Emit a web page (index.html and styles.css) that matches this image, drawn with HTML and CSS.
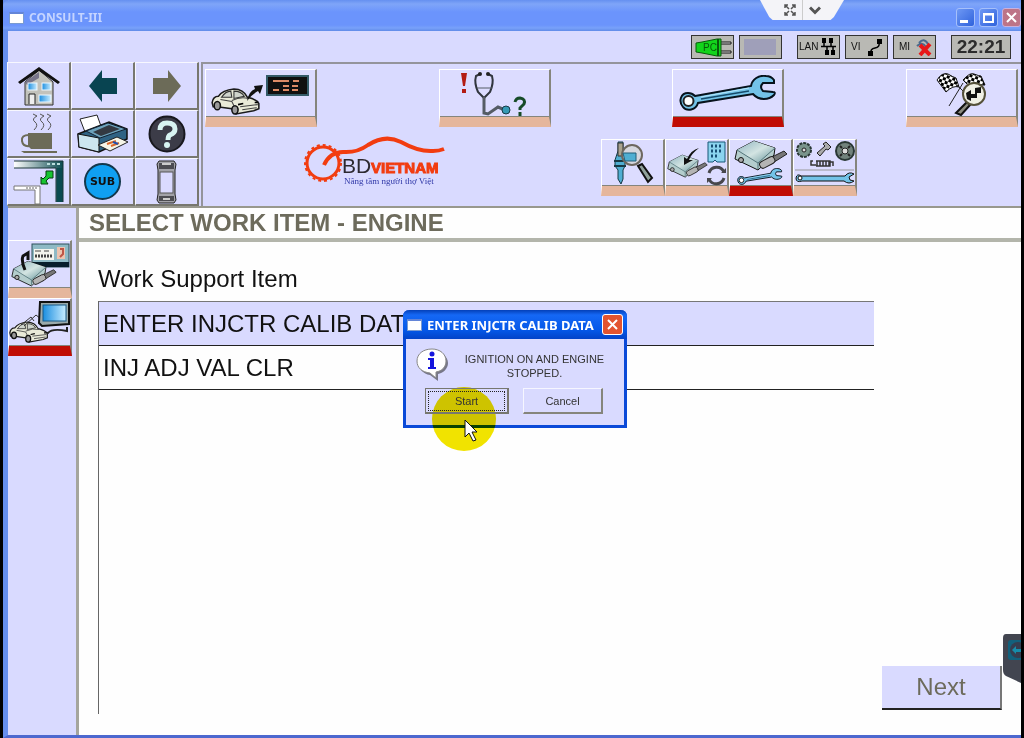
FILE: index.html
```
<!DOCTYPE html>
<html lang="en">
<head>
<meta charset="UTF-8">
<meta name="viewport" content="width=device-width, initial-scale=1.0">
<title>CONSULT-III</title>
<link rel="stylesheet" href="styles.css">
</head>
<body>

<!-- shared shapes -->
<svg class="defs" width="0" height="0" aria-hidden="true">
    <defs>
        <linearGradient id="steel" x1="0" y1="0" x2="1" y2="1">
            <stop offset="0" stop-color="#8fb4c0"/>
            <stop offset="0.5" stop-color="#d3e4e2"/>
            <stop offset="1" stop-color="#5f8f96"/>
        </linearGradient>
        <linearGradient id="glass" x1="0" y1="0" x2="1" y2="0">
            <stop offset="0" stop-color="#1a8ee0"/>
            <stop offset="1" stop-color="#c8ecff"/>
        </linearGradient>
        <linearGradient id="frame" x1="0" y1="0" x2="1" y2="0">
            <stop offset="0" stop-color="#ffffff"/>
            <stop offset="1" stop-color="#0a4a50"/>
        </linearGradient>
        <pattern id="check" width="6" height="6" patternUnits="userSpaceOnUse" patternTransform="rotate(20)">
            <rect width="6" height="6" fill="#fff"/>
            <rect width="3" height="3" fill="#000"/>
            <rect x="3" y="3" width="3" height="3" fill="#000"/>
        </pattern>
        <symbol id="wrench" viewBox="0 0 98 38">
            <path d="M16 21 L72 11 C73 4 80 0 87 1 Q92 1 95 5 L95 8 L84 8 Q80 12 84 16 L94 17 Q97 17 95 20 C90 25 80 26 74 19 L19 28 C17 35 8 37 4 32 C-1 26 2 18 9 18 Q13 18 16 21Z" fill="#73c3e8" stroke="#07131c" stroke-width="2"/>
            <path d="M22 24 L70 16" stroke="#154b6a" stroke-width="1.5"/>
            <path d="M22 22 L70 13" stroke="#b5e6fa" stroke-width="1"/>
            <circle cx="9.5" cy="26" r="5" fill="#fff" stroke="#222" stroke-width="2"/>
        </symbol>
        <symbol id="ecu" viewBox="0 0 54 32">
            <path d="M34 19 L50 11 L53 14 L37 24Z" fill="#777" stroke="#222"/>
            <path d="M3 10 L20 1 L41 8 L40 15 L24 30 L1 19Z" fill="#b4cdcd" stroke="#111"/>
            <path d="M3 10 L20 1 L41 8 L24 23Z" fill="url(#steel)"/>
            <path d="M3 10 L24 23 L41 8 M24 23 V29" fill="none" stroke="#53757a"/>
            <rect x="25" y="19" width="16" height="7" rx="3" transform="rotate(-28 33 22)" fill="#b4b4b4" stroke="#222"/>
            <circle cx="7" cy="20" r="2.5" fill="#aaa" stroke="#111"/>
        </symbol>
        <symbol id="car" viewBox="0 0 48 26">
            <path d="M1 14 Q2 8 7 8 Q11 2 22 1 Q31 1 35 9 Q44 11 46 15 L46 20 L41 22 L24 25 L20 20 L6 18 L2 18Z" fill="#e9ead8" stroke="#1b1b1b" stroke-width="1.5"/>
            <path d="M10 9 Q14 3 19 3 L20 9Z M22 3 Q29 3 32 8 L22 10Z" fill="#cfd4cc" stroke="#333"/>
            <path d="M20 12 Q28 8 36 10 M28 18 L45 16 M30 21 L44 19 M9 11 L20 13 L22 17" fill="none" stroke="#444"/>
            <ellipse cx="6" cy="17" rx="3" ry="4" fill="#999" stroke="#111" stroke-width="1.5"/>
            <ellipse cx="23" cy="21" rx="3" ry="4" fill="#999" stroke="#111" stroke-width="1.5"/>
            <path d="M26 16 L31 15 M42 14 L45 14" stroke="#000" stroke-width="1.5"/>
        </symbol>
    </defs>
</svg>

<div class="window">
    <header class="titlebar">
        <span class="app-icon"></span>
        <h1>CONSULT-III</h1>
        <div class="viewer-tab">
            <button type="button" aria-label="Full screen">
                <svg width="12" height="12" viewBox="0 0 12 12" fill="none" stroke="#555" stroke-width="1.5"><path d="M1 4V1H4M8 1H11V4M11 8V11H8M4 11H1V8M1 1L5 5M11 1L7 5M11 11L7 7M1 11L5 7"/></svg>
            </button>
            <button type="button" aria-label="Show menu">
                <svg width="12" height="9" viewBox="0 0 12 9" fill="none" stroke="#555" stroke-width="3"><path d="M1 1.5L6 6.5L11 1.5"/></svg>
            </button>
        </div>
        <div class="window-buttons">
            <button type="button" aria-label="Minimize"><svg width="17" height="17" viewBox="0 0 17 17"><rect x="3" y="11" width="8" height="3" fill="#fff"/></svg></button>
            <button type="button" aria-label="Maximize"><svg width="17" height="17" viewBox="0 0 17 17"><path d="M4 5H13V13H4Z M4 5.5H13" fill="none" stroke="#fff" stroke-width="2"/></svg></button>
            <button type="button" class="close" aria-label="Close"><svg width="17" height="17" viewBox="0 0 17 17"><path d="M4 4L13 13M13 4L4 13" stroke="#fff" stroke-width="2"/></svg></button>
        </div>
    </header>

    <div class="statusbar">
        <span class="status">
            <svg width="41" height="22" viewBox="0 0 41 22"><path d="M29 8H39V6H29M29 17H39V15H29" fill="#ddd" stroke="#111"/><path d="M4 7L10 6L25 3H29V20H25L10 17L4 16Z" fill="#12d41b" stroke="#075a0a"/><path d="M26 3V20" stroke="#075a0a" stroke-width="2"/><text x="11" y="15" class="pc-text">PC</text></svg>
        </span>
        <span class="status"><span class="battery"></span></span>
        <span class="status gap">LAN
            <svg width="16" height="17" viewBox="0 0 16 17"><path d="M2 0H6V5H2ZM9 0H13V5H9ZM5 12H9V17H5ZM11 12H15V17H11Z" fill="#000"/><path d="M1 8.5H16M4 4V8M11 4V8M7 8V13M13 8V13" stroke="#000" stroke-width="1.5"/></svg>
        </span>
        <span class="status">VI
            <svg width="16" height="18" viewBox="0 0 16 18"><path d="M9 1H14V6H9ZM0 13H5V18H0Z" fill="#000"/><path d="M11 5Q12 9 7 10Q2 11 3 15" fill="none" stroke="#000" stroke-width="1.5"/></svg>
        </span>
        <span class="status">MI
            <svg width="16" height="18" viewBox="0 0 16 18"><path d="M3 5Q8 -1 12 6M1 8Q6 3 10 9" fill="none" stroke="#4b6a8c" stroke-width="2"/><path d="M4 7L14 17M14 6L4 17" stroke="#e81818" stroke-width="4"/></svg>
        </span>
        <time class="clock gap">22:21</time>
    </div>

    <div class="tools">
        <nav class="keypad" aria-label="Main">
            <button type="button" aria-label="Home">
                <svg width="44" height="40" viewBox="0 0 44 40"><path d="M8 16L22 4L36 16V39H8Z" fill="#c2c2bb" stroke="#333"/><path d="M1 16L22 1L43 16L41 18L22 5L3 18Z" fill="#111"/><path d="M8 16L22 6L22 12L10 19Z" fill="#777489"/><g fill="url(#glass)" stroke="#edf7ff"><rect x="11" y="17" width="9" height="7"/><rect x="25" y="17" width="9" height="7"/><rect x="22" y="29" width="12" height="7"/></g><path d="M12 38V28H18V38" fill="#eee" stroke="#222"/></svg>
            </button>
            <button type="button" aria-label="Back">
                <svg width="30" height="34" viewBox="0 0 30 34"><path d="M1 17L14 1V9H29V25H14V33Z" fill="#084451"/></svg>
            </button>
            <button type="button" aria-label="Forward">
                <svg width="30" height="34" viewBox="0 0 30 34"><path d="M29 17L16 1V9H1V25H16V33Z" fill="#6c6b58"/></svg>
            </button>
            <button type="button" aria-label="Standby">
                <svg width="38" height="42" viewBox="0 0 38 42"><path d="M14 1L18 3Q12 6 16 9T15 17M21 1L25 3Q19 6 23 9T22 17M28 1L32 3Q26 6 30 9T29 17" transform="translate(-1 0)" fill="none" stroke="#555"/><path d="M8 20H32V36H11L8 33Z" fill="#6c6b58"/><path d="M9 22Q1 22 2 28Q3 34 10 33" fill="none" stroke="#6c6b58" stroke-width="2"/><path d="M1 38H37V40H4Z" fill="#6c6b58"/></svg>
            </button>
            <button type="button" aria-label="Print">
                <svg width="52" height="40" viewBox="0 0 52 40"><path d="M3 5L20 1L25 15L8 18Z" fill="#fff" stroke="#222"/><path d="M1 20L32 8L50 15L50 25L22 38L2 33Z" fill="#2f6384" stroke="#111" stroke-width="1.5"/><path d="M1 20L22 24V38L2 33Z" fill="#cce6f0" stroke="#111"/><path d="M9 17L31 9L49 15L23 24Z" fill="#6da3bd" stroke="#123"/><path d="M16 18L32 11L43 15L24 22Z" fill="#333942"/><path d="M21 31L40 23L51 28L33 37Z" fill="#f5f5e8" stroke="#222"/><path d="M30 30L39 27M34 32L42 29" stroke="#d9682a" stroke-width="2"/><path d="M36 28L41 30" stroke="#2450aa" stroke-width="2"/></svg>
            </button>
            <button type="button" aria-label="Help">
                <svg width="38" height="38" viewBox="0 0 38 38"><circle cx="19" cy="19" r="17.5" fill="#3c3c48" stroke="#18181e" stroke-width="2"/><path d="M12 15Q12 8 19 8Q27 8 27 14Q27 18 22 20Q20 21 20 25" fill="none" stroke="#d8f4f2" stroke-width="5"/><circle cx="19" cy="30" r="3" fill="#d8f4f2"/></svg>
            </button>
            <button type="button" aria-label="Resize screen">
                <svg width="52" height="44" viewBox="0 0 52 44"><path d="M1 1H50V42H43V8H1Z" fill="url(#frame)"/><path d="M44 8H50V42H44Z" fill="#0a4a50"/><path d="M1 1H50V42M1 8H43V42" fill="none" stroke="#1b3538"/><path d="M34 4H48" stroke="#bdd" stroke-width="2" stroke-dasharray="3 2"/><path d="M1 26H27V44H22V30H1Z" fill="#fff" stroke="#777"/><path d="M13 28H24" stroke="#666" stroke-width="1" stroke-dasharray="2 1"/><path d="M28 24V17L30 19L33 16V11H40V18H36L33 21L35 24Z" fill="#16c430" stroke="#073d10"/></svg>
            </button>
            <button type="button" aria-label="Sub"><span class="sub">SUB</span></button>
            <button type="button" aria-label="Device">
                <svg width="22" height="44" viewBox="0 0 22 44"><path d="M3 1H18L20 4L19 10V34L20 40L18 43H3L1 40L2 34V10L1 4Z" fill="#a2a2a8" stroke="#222"/><path d="M3 3H18V9H3ZM3 36H18V41H3Z" fill="#4c4c52"/><path d="M6 4H15M7 39H14" stroke="#ccc" stroke-width="2"/><rect x="4" y="12" width="13" height="21" fill="#dadaff" stroke="#555"/></svg>
            </button>
        </nav>

        <div class="functions">
            <nav class="function-row" aria-label="Functions">
                <button type="button" class="tool" aria-label="Vehicle connection">
                    <svg width="100" height="44" viewBox="0 0 100 44"><use href="#car" x="0" y="16" width="50" height="27"/><path d="M36 29Q38 19 44 17L43 14L52 13L49 22L47 19Q40 23 36 29Z" fill="#111"/><rect x="56" y="4" width="41" height="19" fill="#101010" stroke="#345b68" stroke-width="2"/><path d="M62 9H78M82 9H88M72 14H78M81 14H87M62 18H68M72 18H78M81 18H87" stroke="#dd8b66" stroke-width="2"/></svg>
                </button>
                <button type="button" class="tool" aria-label="Diagnosis">
                    <svg width="68" height="46" viewBox="0 0 68 46"><path d="M1 2H7L5 15H3ZM2 18H6V22H2Z" fill="#b31c13"/><path d="M20 3L16 5Q14 12 18 21L24 27L30 21Q34 12 32 5L28 3" fill="none" stroke="#30353e" stroke-width="2"/><path d="M17 17H32" stroke="#555c65"/><path d="M24 26V42L28 43L38 36L45 39" fill="none" stroke="#555c65" stroke-width="3"/><circle cx="20" cy="3" r="2" fill="#222"/><circle cx="28" cy="3" r="2" fill="#222"/><circle cx="46" cy="39" r="4" fill="#369ab5" stroke="#183a46"/><path d="M55 31Q56 27 60 27Q66 28 64 33L60 37V39M60 41V45" fill="none" stroke="#164b27" stroke-width="3"/></svg>
                </button>
                <button type="button" class="tool active" aria-label="Work support">
                    <svg width="98" height="38"><use href="#wrench"/></svg>
                </button>
                <button type="button" class="tool" aria-label="Final check">
                    <svg width="50" height="46" viewBox="0 0 50 46"><path d="M1 9Q6 1 12 3Q17 6 20 7L23 16Q17 14 10 21ZM27 9Q34 1 38 3Q43 5 45 5L49 14Q38 15 31 13Z" fill="url(#check)" stroke="#111"/><path d="M22 15L27 20M27 12L13 35" stroke="#222"/><path d="M31 31L34 34L25 44L20 42Z" fill="#8c8c80" stroke="#111" stroke-width="2"/><circle cx="38" cy="23" r="11" fill="#f0f0e5" stroke="#55513a" stroke-width="2"/><path d="M30 22L35 19V23H39V17L45 16V22H41V27H35V30L31 28Z" fill="#111"/></svg>
                </button>
            </nav>

            <div class="second-row">
                <svg class="logo" width="142" height="52" viewBox="0 0 142 52" role="img" aria-label="OBD Vietnam">
                    <circle cx="19" cy="28" r="16" fill="none" stroke="#f23c10" stroke-width="3"/>
                    <circle cx="19" cy="28" r="18" fill="none" stroke="#f23c10" stroke-width="2" stroke-dasharray="3 3"/>
                    <path d="M20 30Q26 17 39 17Q53 18 64 10Q81 -1 97 7Q115 17 129 16Q135 16 140 14" fill="none" stroke="#f23c10" stroke-width="4"/>
                    <text x="38" y="38" class="logo-bd">BD</text>
                    <text x="67" y="38" class="logo-vn">VIETNAM</text>
                    <text x="40" y="49" class="logo-tag">Nâng tầm người thợ Việt</text>
                </svg>
                <nav class="sub-row" aria-label="Work support functions">
                    <button type="button" class="tool small" aria-label="Data monitor">
                        <svg width="42" height="44" viewBox="0 0 42 44"><path d="M6 1H11V10L13 19V25L11 29V38L9 43L6 38V29L3 25V19L6 10Z" fill="#4faed2" stroke="#173944"/><path d="M6 2H11V15H6Z" fill="#a9a38f" stroke="#333"/><path d="M2 20H14M2 25H14" stroke="#173944" stroke-width="2"/><path d="M26 25L30 23L40 37L36 41Z" fill="#90a19a" stroke="#111" stroke-width="2"/><circle cx="20" cy="14" r="10" fill="#d6d7df" stroke="#6d675f" stroke-width="2"/><path d="M11 12H24V20H13Z" fill="#4faed2" stroke="#235e78"/></svg>
                    </button>
                    <button type="button" class="tool small" aria-label="Reprogramming">
                        <svg width="60" height="45" viewBox="0 0 60 45"><use href="#ecu" x="0" y="13" width="41" height="25"/><path d="M32 7Q24 13 22 19L26 19L17 24L17 16L20 18Q24 9 32 7Z" fill="#111"/><path d="M41 1H58V21H50L48 19L46 21H41Z" fill="#8bd4ef" stroke="#195777"/><path d="M44 5H56M44 10H56M44 15H51" stroke="#184e75" stroke-width="3" stroke-dasharray="2 2"/><path d="M42 32A8 8 0 0 1 57 31M57 37A8 8 0 0 1 42 38" fill="none" stroke="#47474c" stroke-width="3"/><path d="M54 32H59V27ZM45 37H40V42Z" fill="#47474c"/></svg>
                    </button>
                    <button type="button" class="tool small active" aria-label="Engine work support">
                        <svg width="54" height="46" viewBox="0 0 54 46"><use href="#ecu" x="0" y="0" width="54" height="32"/><use href="#wrench" x="3" y="28" width="46" height="18"/></svg>
                    </button>
                    <button type="button" class="tool small" aria-label="Parts">
                        <svg width="60" height="45" viewBox="0 0 60 45"><circle cx="9" cy="9" r="7" fill="#79948b" stroke="#293735" stroke-width="2" stroke-dasharray="3 1"/><circle cx="9" cy="9" r="2" fill="#ddd" stroke="#222"/><path d="M22 12L30 5L28 3L31 1L36 6L33 9L31 8L25 15Z" fill="#aaa" stroke="#222"/><circle cx="50" cy="10" r="9" fill="#71827c" stroke="#293735" stroke-width="2"/><circle cx="50" cy="10" r="3" fill="#ddd" stroke="#222"/><path d="M45 5L47 7M55 5L53 7M45 15L47 13M55 15L53 13" stroke="#222" stroke-width="2"/><path d="M18 20H16V24H21M22 20V25M25 20V25M28 20V25M31 20V25M34 20V25M21 20H35V25H21M35 21H38V25" fill="none" stroke="#333" stroke-width="1.5"/><path d="M0 29H59" stroke="#999"/><path d="M6 35H50Q54 30 59 33L54 36L55 39L59 40Q54 44 49 40H7Q1 42 1 37Q2 32 6 35Z" fill="#73c3e8" stroke="#111"/><circle cx="5" cy="37" r="2" fill="#fff" stroke="#111"/></svg>
                    </button>
                </nav>
            </div>
        </div>
    </div>

    <div class="workspace">
        <nav class="sidebar" aria-label="Work type">
            <button type="button" class="tool small" aria-label="ECU registration">
                <svg width="60" height="46" viewBox="0 0 60 46"><rect x="22" y="2" width="37" height="23" fill="#8fbac5" stroke="#2e505b"/><rect x="24" y="7" width="20" height="11" fill="#f5f5ee"/><path d="M25 9H31M34 9H39" stroke="#444"/><path d="M25 14H42" stroke="#444" stroke-width="3" stroke-dasharray="2 1"/><rect x="47" y="5" width="8" height="12" fill="#ecc4b0"/><path d="M50 7H53V12L50 15" fill="none" stroke="#be5546" stroke-width="2"/><path d="M22 20H59V25H22Z" fill="#071e2c"/><use href="#ecu" x="1" y="18" width="46" height="28"/><path d="M15 28Q11 19 13 14L18 11V18" fill="none" stroke="#111" stroke-width="3"/></svg>
            </button>
            <button type="button" class="tool small active" aria-label="Vehicle work support">
                <svg width="62" height="46" viewBox="0 0 62 46"><path d="M58 27V31Q43 28 39 33L29 32" fill="none" stroke="#222" stroke-width="2"/><use href="#car" x="0" y="20" width="40" height="24"/><path d="M15 26L27 15L32 19M12 25L22 17L25 21" fill="none" stroke="#333"/><path d="M31 2H60V24L33 26L30 23Z" fill="#9baaac" stroke="#111" stroke-width="2"/><rect x="34" y="5" width="23" height="16" fill="url(#glass)" stroke="#175987"/></svg>
            </button>
        </nav>

        <main class="content">
            <h2>SELECT WORK ITEM - ENGINE</h2>
            <div class="work-area">
                <h3 id="items">Work Support Item</h3>
                <div class="item-list">
                    <table aria-labelledby="items">
                        <tbody>
                            <tr class="selected"><td>ENTER INJCTR CALIB DATA</td></tr>
                            <tr><td>INJ ADJ VAL CLR</td></tr>
                        </tbody>
                    </table>
                </div>
                <button type="button" class="next">Next</button>
            </div>
            <button type="button" class="remote-tab" aria-label="Remote session">
                <svg width="18" height="49" viewBox="0 0 18 49"><path d="M3 0H18V49L3 42Q0 40 0 36V4Q0 0 3 0Z" fill="#424550"/><rect x="5" y="6" width="20" height="20" rx="3" fill="#12607c"/><circle cx="15" cy="16" r="8" fill="#343d50"/><path d="M9 16L13 12V15H18V18H13V20Z" fill="#168caa"/></svg>
            </button>
        </main>
    </div>
</div>

<section class="dialog" role="dialog" aria-labelledby="dialog-title">
    <header>
        <span class="app-icon"></span>
        <h2 id="dialog-title">ENTER INJCTR CALIB DATA</h2>
        <button type="button" class="close" aria-label="Close"><svg width="17" height="17" viewBox="0 0 17 17"><path d="M4 4L13 13M13 4L4 13" stroke="#fff" stroke-width="2"/></svg></button>
    </header>
    <div class="message">
        <svg width="34" height="34" viewBox="0 0 34 34"><path d="M16 3C25 3 32 8 32 15C32 21 27 25 22 26L22 33L14 27C7 26 3 21 3 15C3 8 8 3 16 3Z" fill="#777788"/><path d="M16 1C24 1 30 6 30 13C30 19 26 23 20 24L20 30L14 25C6 24 1 20 1 13C1 6 7 1 16 1Z" fill="#fff" stroke="#888"/><circle cx="16" cy="6" r="2.5" fill="#1515dd"/><path d="M12 10H18V19H20V21H12V19H14V12H12Z" fill="#1515dd"/></svg>
        <p>IGNITION ON AND ENGINE<br>STOPPED.</p>
    </div>
    <div class="dialog-buttons">
        <button type="button" class="default"><span>Start</span></button>
        <button type="button">Cancel</button>
    </div>
    <span class="click-spot"></span>
    <svg class="pointer" width="14" height="24" viewBox="0 0 14 24"><path d="M1 1V18L5 14L9 22L12 21L8 13H13Z" fill="#fff" stroke="#111"/></svg>
</section>

</body>
</html>
```

FILE: styles.css
```
* {
    box-sizing: border-box;
}
body {
    margin: 0;
    padding: 0 3px;
    background: #000;
    font-family: "Liberation Sans", Arial, sans-serif;
    color: #111;
}
h1, h2, h3, p {
    margin: 0;
    font-weight: normal;
}
button {
    margin: 0;
    padding: 0;
    border: none;
    background: none;
    font-family: inherit;
    color: inherit;
    cursor: pointer;
}
svg {
    display: block;
    flex: none;
}
.defs {
    position: absolute;
}
.window {
    display: flex;
    flex-direction: column;
    min-height: 100vh;
    background: #d9daff;
    border-left: 5px solid #668fee;
    border-bottom: 3px solid #4d68cf;
}

/* title bar */
.titlebar {
    position: relative;
    display: flex;
    align-items: center;
    height: 31px;
    margin-left: -5px;
    padding: 4px 0 0 6px;
    background: linear-gradient(#6590f0 0, #7fa5f8 4px, #6b94fc 12px, #6b94fc 25px, #78a1fa 28px, #608be8);
    border-top-left-radius: 6px;
}
.app-icon {
    width: 15px;
    height: 12px;
    background: #fff;
    border: 1px solid #7a9bd0;
    border-top: 2px solid #6385d8;
}
.titlebar h1 {
    margin-left: 5px;
    font: bold 12px "Noto Sans", sans-serif;
    color: #c5d4ff;
}
.viewer-tab {
    position: absolute;
    top: 0;
    right: 177px;
    display: flex;
    justify-content: center;
    width: 84px;
    height: 20px;
    background: #f4f4f8;
    clip-path: polygon(0 0, 100% 0, 88% 85%, 84% 100%, 15% 100%, 11% 85%);
}
.viewer-tab button {
    display: flex;
    align-items: center;
    justify-content: center;
    width: 25px;
}
.viewer-tab button + button {
    border-left: 1px solid #ccc;
}
.window-buttons {
    display: flex;
    gap: 4px;
    margin-left: auto;
}
.window-buttons button {
    width: 19px;
    height: 19px;
    background: linear-gradient(135deg, #6e98f4, #2f62dc);
    border: 1px solid #a6c0fa;
    border-radius: 3px;
}
.window-buttons .close {
    background: #bd7487;
    border-color: #c9b1dc;
}

/* status bar */
.statusbar {
    display: flex;
    align-items: center;
    justify-content: flex-end;
    gap: 5px;
    height: 31px;
    padding-right: 10px;
}
.status {
    display: flex;
    align-items: center;
    justify-content: space-between;
    width: 43px;
    height: 24px;
    background: #b9b9b4;
    border: 1px solid #333;
    font-size: 10px;
}
.status:nth-child(n+3) {
    padding: 0 3px 0 1px;
}
.status:nth-child(n+4) {
    padding-left: 5px;
}
.gap {
    margin-left: 10px;
}
.pc-text {
    font: 10px "Liberation Sans", sans-serif;
    fill: #075a0a;
}
.battery {
    width: 32px;
    height: 16px;
    margin-left: 4px;
    background: #9f9fb9;
}
.clock {
    width: 60px;
    height: 24px;
    background: #b9b9b4;
    border: 1px solid #333;
    font-size: 19px;
    font-weight: bold;
    line-height: 22px;
    text-align: center;
    color: #2c2c2c;
}

/* tool area */
.tools {
    display: flex;
    height: 144px;
}
.keypad {
    display: grid;
    grid-template-columns: repeat(3, 64px);
    grid-template-rows: repeat(3, 48px);
    margin-left: -1px;
}
.keypad button {
    display: flex;
    align-items: center;
    justify-content: center;
    border: 1px solid #f7f7ff;
    border-right: 2px solid #77776f;
    border-bottom: 2px solid #77776f;
}
.sub {
    width: 37px;
    height: 37px;
    border: 2px solid #14384c;
    border-radius: 50%;
    background: #10a0f2;
    font: bold 11px "DejaVu Sans", sans-serif;
    line-height: 33px;
    text-align: center;
}
.functions {
    flex: 1;
    margin-left: 2px;
    padding: 5px 3px 0 2px;
    border-top: 2px solid #94949b;
    border-left: 2px solid #94949b;
}
.function-row {
    display: flex;
    justify-content: space-between;
}
.tool {
    display: flex;
    align-items: center;
    justify-content: center;
    width: 112px;
    height: 58px;
    background: #dcdcff;
    border-top: 1px solid #fff;
    border-left: 1px solid #fff;
    border-right: 2px solid #85857c;
    border-bottom: 10px solid #e5b69c;
    box-shadow: inset 0 -1px #85857c;
}
.tool.active {
    border-bottom-color: #c00c04;
}
.tool.small {
    width: 64px;
    height: 57px;
}
.second-row {
    display: flex;
    justify-content: space-between;
    align-items: flex-start;
    margin-top: 8px;
    padding: 0 161px 0 99px;
}
.sub-row {
    display: flex;
    margin-top: 4px;
}
.logo-bd {
    font: 21px "Liberation Sans", sans-serif;
    fill: #2c2930;
}
.logo-vn {
    font: bold 15px "Liberation Sans", sans-serif;
    fill: #f23c10;
    stroke: #f23c10;
}
.logo-tag {
    font: 9px "Liberation Serif", serif;
    fill: #3038a8;
}

/* work area */
.workspace {
    display: flex;
    flex: 1;
    border-top: 2px solid #98988e;
}
.sidebar {
    width: 68px;
    padding-top: 32px;
}
.sidebar .tool {
    height: 58px;
}
.content {
    position: relative;
    display: flex;
    flex: 1;
    flex-direction: column;
    background: #fefefe;
    border-left: 3px solid #a5a59d;
}
.content > h2 {
    height: 34px;
    padding-left: 10px;
    border-bottom: 4px solid #b3b5ab;
    font-size: 24px;
    font-weight: bold;
    line-height: 30px;
    color: #6d6b5c;
}
.work-area {
    display: grid;
    flex: 1;
    grid-template-columns: 1fr 120px;
    grid-template-rows: auto 1fr;
    column-gap: 8px;
    padding: 22px 19px 21px 19px;
}
.work-area h3 {
    grid-column: 1 / 3;
    font-size: 24px;
    line-height: 30px;
    margin-bottom: 7px;
}
.item-list {
    border-left: 1px solid #666;
}
.item-list table {
    width: 100%;
    border-collapse: collapse;
    border-top: 1px solid #777;
}
.item-list td {
    height: 44px;
    padding: 0 4px;
    border-bottom: 1px solid #222;
    font-size: 24px;
}
.item-list .selected {
    background: #d9daff;
}
.next {
    align-self: end;
    height: 44px;
    margin-bottom: 4px;
    background: #d9daff;
    border-right: 2px solid #777;
    border-bottom: 2px solid #222;
    font-size: 24px;
    color: #6d6b5c;
}
.remote-tab {
    position: absolute;
    right: 0;
    bottom: 52px;
}

/* dialog */
.dialog {
    position: absolute;
    top: 310px;
    left: calc(50% - 109px);
    width: 224px;
    background: #d9daff;
    border: 3px solid #0a49d8;
    border-top: none;
    border-radius: 6px 6px 0 0;
}
.dialog header {
    display: flex;
    align-items: center;
    height: 29px;
    margin: 0 -3px;
    padding: 1px 4px;
    background: linear-gradient(#0440b8, #1568f5 5px, #0558e8 20px, #0343c8);
    border-radius: 6px 6px 0 0;
}
.dialog h2 {
    margin-left: 5px;
    font: bold 13px "Noto Sans", sans-serif;
    color: #fff;
    white-space: nowrap;
}
.dialog .close {
    width: 21px;
    height: 21px;
    margin-left: auto;
    padding: 1px;
    background: #e35430;
    border: 1px solid #fff;
    border-radius: 3px;
}
.message {
    display: flex;
    gap: 7px;
    padding: 9px 12px 0 10px;
}
.message p {
    flex: 1;
    padding-top: 4px;
    font-size: 11px;
    line-height: 14px;
    text-align: center;
    color: #333;
}
.dialog-buttons {
    display: flex;
    gap: 14px;
    padding: 6px 21px 11px 19px;
}
.dialog-buttons button {
    position: relative;
    z-index: 1;
    flex: 1;
    height: 26px;
    border: 1px solid #f6f6ff;
    border-right: 2px solid #85857c;
    border-bottom: 2px solid #85857c;
    font-size: 11px;
    color: #333;
}
.dialog-buttons .default {
    padding: 2px;
    border: 2px solid #77776f;
    border-top-width: 1px;
    border-left-width: 1px;
}
.default span {
    display: block;
    border: 1px dotted #222;
    line-height: 18px;
}
.click-spot {
    position: absolute;
    top: 77px;
    left: 26px;
    width: 64px;
    height: 64px;
    border-radius: 50%;
    background: #f2e400;
    mix-blend-mode: multiply;
}
.pointer {
    position: absolute;
    top: 109px;
    left: 58px;
}
```
